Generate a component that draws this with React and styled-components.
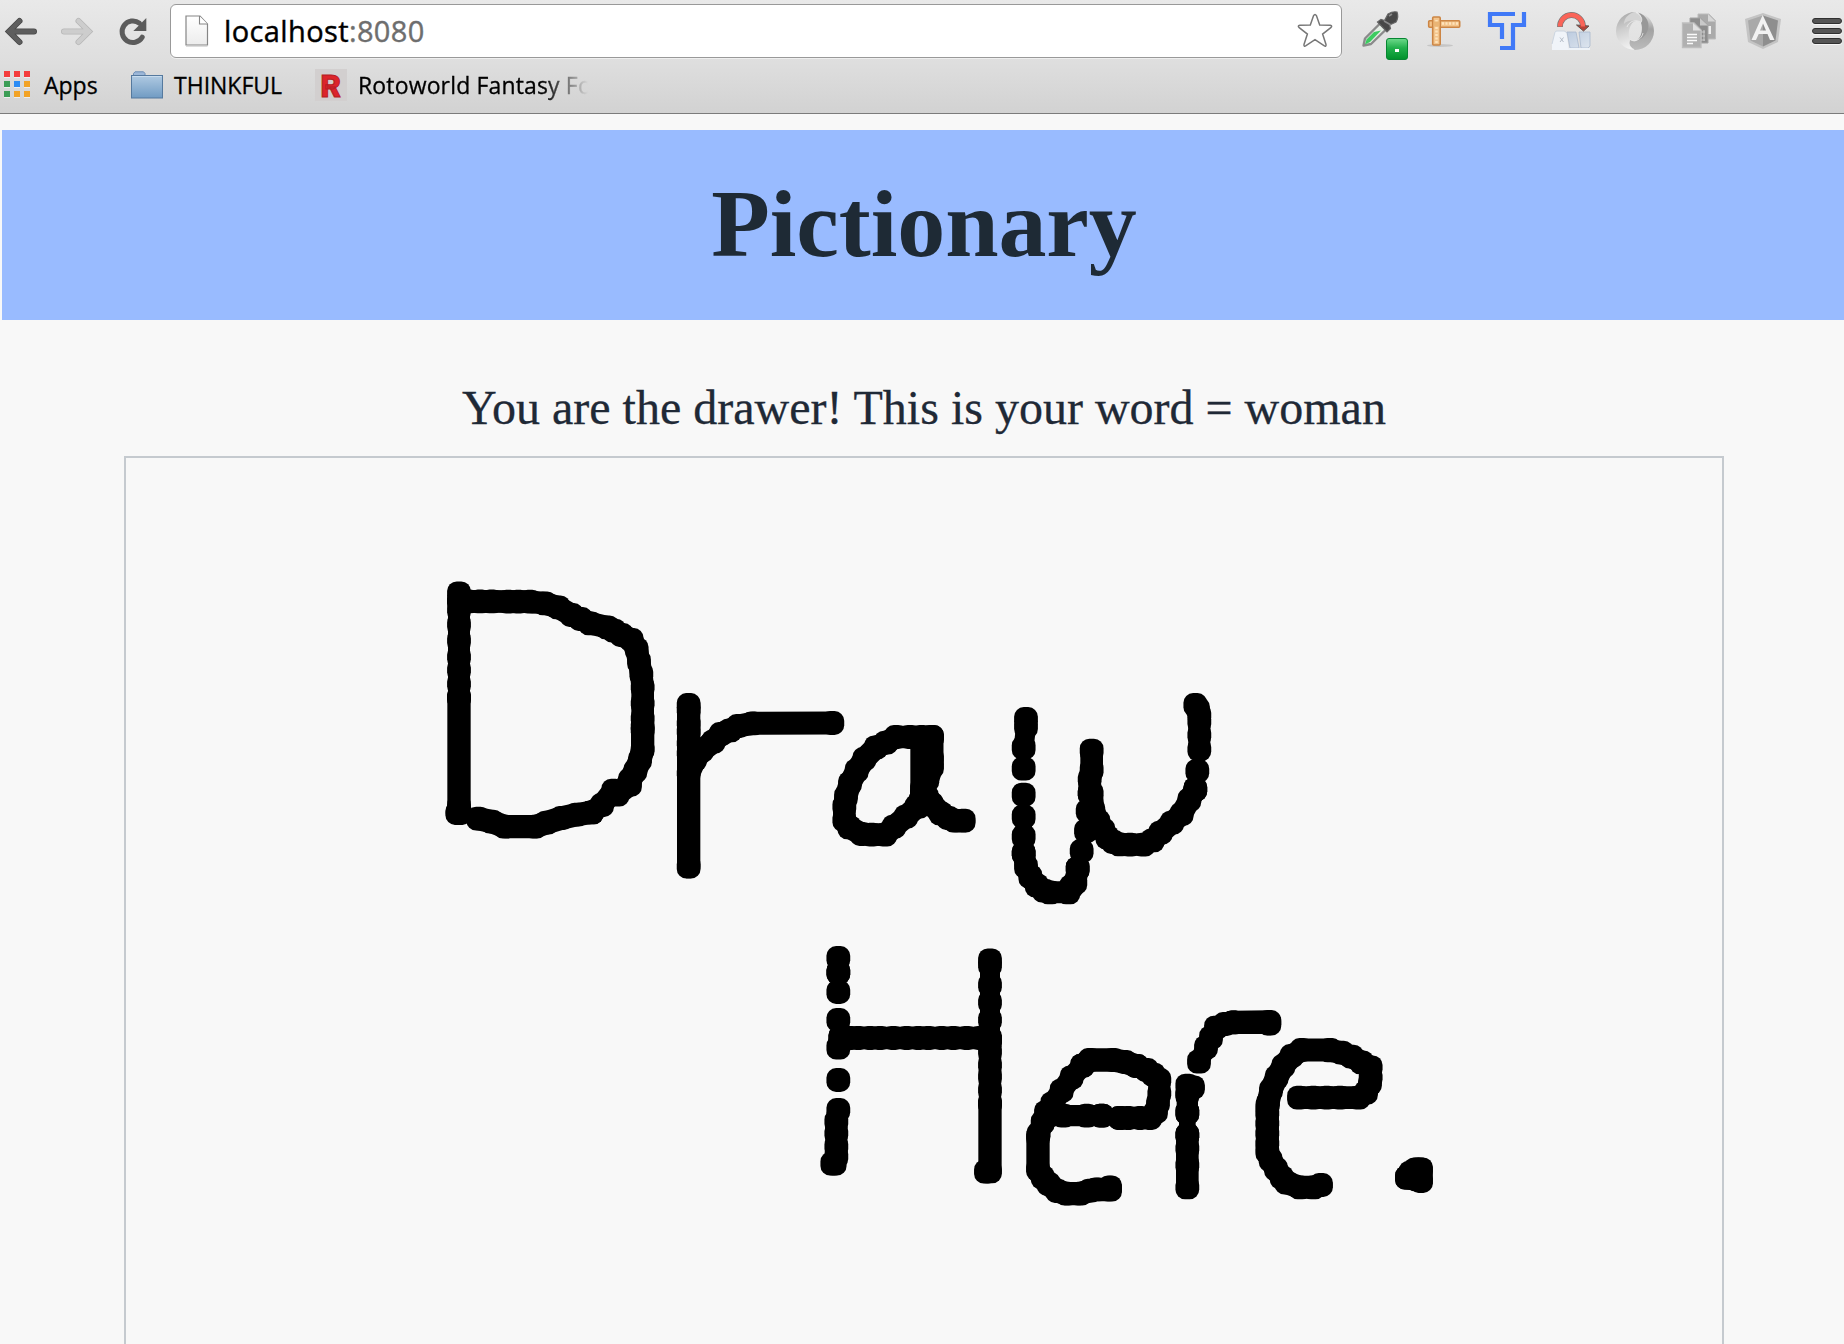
import React from "react";
import styled, { createGlobalStyle } from "styled-components";

const GlobalStyle = createGlobalStyle`
  * { box-sizing: border-box; }
  html, body { margin: 0; padding: 0; background: #f8f8f8; overflow: hidden; }
`;

const Window = styled.div`
  display: flex;
  flex-direction: column;
  height: 1344px;
  overflow: hidden;
  background: #f8f8f8;
`;

const Chrome = styled.header`
  flex: none;
  height: 114px;
  border-bottom: 1px solid #7b7b7b;
  background: linear-gradient(#e9e9e9, #dedede 55%, #d2d2d2);
  font-family: "Open Sans", "Noto Sans", sans-serif;
  color: #000;
`;

const Toolbar = styled.div`
  display: flex;
  align-items: flex-start;
  height: 62px;
  padding: 4px 0 0 4px;
`;

const NavButtons = styled.div`
  display: flex;
  width: 166px;
  padding-top: 10px;
`;

const NavButton = styled.span`
  display: flex;
  width: ${(p) => p.$w}px;
  svg { display: block; }
`;

const AddressBar = styled.div`
  display: flex;
  align-items: center;
  width: 1172px;
  height: 54px;
  padding: 0 8px 0 14px;
  border: 1px solid #999;
  border-radius: 6px;
  background: #fff;
  box-shadow: 0 1px 0 rgba(255, 255, 255, 0.5);
`;

const Url = styled.span`
  flex: 1;
  margin-left: 15px;
  font-size: 29px;
  line-height: 40px;
  letter-spacing: 0.38px;
  -webkit-text-stroke: 0.4px currentColor;
`;

const Port = styled.span`
  color: #6e6e6e;
`;

const Extensions = styled.div`
  display: flex;
  gap: 26px;
  margin: 8px 0 0 18px;
`;

const Glyph = styled.svg`
  display: block;
  flex: none;
  overflow: visible;
`;

const Bookmarks = styled.nav`
  display: flex;
  height: 51px;
  padding-left: 4px;
`;

const Bookmark = styled.span`
  display: flex;
  align-items: center;
  height: 46px;
  width: ${(p) => p.$w}px;
`;

const BookmarkLabel = styled.span`
  margin-left: ${(p) => p.$gap}px;
  font-size: 23px;
  line-height: 32px;
  letter-spacing: ${(p) => p.$spacing || 0}px;
  white-space: nowrap;
  -webkit-text-stroke: 0.3px currentColor;
  ${(p) => p.$fade && "-webkit-mask-image: linear-gradient(90deg, #000 185px, transparent 230px); mask-image: linear-gradient(90deg, #000 185px, transparent 230px);"}
`;

const Page = styled.main`
  display: flex;
  flex-direction: column;
  align-items: center;
  width: 1844px;
  margin-left: 2px;
  padding-top: 16px;
  font-family: "Liberation Serif", "Times New Roman", serif;
  color: #1f2936;
`;

const Banner = styled.h1`
  display: flex;
  justify-content: center;
  width: 100%;
  height: 190px;
  margin: 0;
  padding-top: 39px;
  background: #99bbff;
  font-size: 96px;
  font-weight: 700;
  line-height: 110px;
  letter-spacing: -0.1px;
  color: #1e2a35;
`;

const Notice = styled.p`
  margin: 60px 0 0;
  height: 76px;
  font-size: 48px;
  line-height: 56px;
  white-space: nowrap;
  -webkit-text-stroke: 0.3px currentColor;
`;

const Board = styled.div`
  width: 1600px;
  height: 964px;
  border: 2px solid #c5cacf;
`;

/* Pen strokes, in thirds of a pixel from each group's origin.
   w is the width of the line joining the brush dabs; 0 leaves the dabs loose. */
const DAB = 35.7;
const drawing = [
  {
    origin: [430, 560],
    strokes: [
      { w: 66, p: "87,100 87,122 87,150 87,194 87,242 87,291 87,330 87,372 87,412" },
      { w: 70, p: "87,412 87,740 82,759 90,759" },
      { w: 68, p: "87,124 115,124 150,124 185,124 235,125 265,125 300,125 345,130 385,142 425,165 452,177 481,190 532,202 552,212 575,225 605,240 620,268 627,305 634,342 638,382 638,430 638,475 638,510" },
      { w: 70, p: "638,500 638,568 630,600 616,633 600,660 596,674" },
      { w: 66, p: "600,674 562,704 550,692 516,735 485,757" },
      { w: 70, p: "485,757 440,764 395,774 350,788 315,800 225,800 185,785 145,776" },
      { w: 70, p: "776,435 776,450 776,490 776,515 776,550 776,580 776,920" },
      { w: 69, p: "776,640 795,598 815,572 850,545 873,522 900,511 925,498 968,490 1207,489" },
    ],
  },
  {
    origin: [820, 660],
    strokes: [
      { w: 68, p: "336,231 305,231 270,231 228,231 198,248 168,262 133,297 110,332 90,370 78,410 73,440 73,480 88,502 125,522 155,524 195,524 222,500 258,470 290,440 306,405" },
      { w: 69, p: "336,231 336,295 336,320 322,360 306,400 295,440" },
      { w: 70, p: "306,250 306,385 320,410 335,432 362,460 385,474 405,482 431,482" },
      { w: 60, p: "618,177 618,200 611,263" },
      { w: 0, p: "611,326 611,404" },
      { w: 50, p: "611,470 611,530 611,580" },
      { w: 66, p: "611,580 618,620 631,650 650,676 672,692 690,697 745,697 754,680 766,668 773,626" },
      { w: 44, p: "773,626 785,573 798,513 803,453 809,400" },
      { w: 68, p: "809,400 809,358 815,330 815,272" },
      { w: 67, p: "815,400 820,450 835,485 850,510 862,532 880,546 900,553 930,554 970,554 998,541 1022,518 1056,488 1085,462 1108,420 1126,388" },
      { w: 44, p: "1126,388 1132,333" },
      { w: 66, p: "1138,268 1138,225 1138,185 1138,165 1134,147 1126,135" },
    ],
  },
  {
    origin: [800, 930],
    strokes: [
      { w: 56, p: "115,84 115,127" },
      { w: 30, p: "115,127 115,186" },
      { w: 0, p: "115,270 115,450" },
      { w: 66, p: "121,322 115,353" },
      { w: 66, p: "115,540 109,575 109,610 109,650 109,680 104,701 97,701" },
      { w: 68, p: "121,324 150,324 175,324 210,324 240,324 280,324 320,324 355,324 385,324 425,324 460,324 500,324 540,324 570,324" },
      { w: 60, p: "570,91 570,105 570,165 570,217 570,270 570,332" },
      { w: 67, p: "570,332 570,365 570,405 570,440 570,480 570,520" },
      { w: 70, p: "570,520 570,724 558,725" },
      { w: 64, p: "745,557 790,557 860,557 905,557" },
      { w: 66, p: "960,564 985,564 1020,564 1050,564 1068,545 1074,520 1078,490 1078,450 1060,434 1040,420 1010,408" },
      { w: 70, p: "1010,408 975,396 940,390 870,390 847,407" },
      { w: 64, p: "847,407 815,442 785,482 757,521 738,547 728,578 716,612" },
      { w: 70, p: "714,620 714,718 728,742 746,762 772,783 800,791 840,791 870,782 890,778 930,779 930,772" },
      { w: 20, p: "905,557 960,564" },
    ],
  },
  {
    origin: [1140, 990],
    strokes: [
      { w: 60, p: "177,215 198,172 213,143 228,113 255,102 280,97" },
      { w: 70, p: "280,97 388,96 388,101" },
      { w: 68, p: "142,287 159,292 142,315" },
      { w: 64, p: "142,310 142,368" },
      { w: 50, p: "142,368 142,435" },
      { w: 68, p: "142,435 142,475 142,525 142,592" },
      { w: 68, p: "477,323 520,323 560,323 600,323 655,323 678,308 690,280 692,262 692,232 665,217 635,200 605,188 570,181" },
      { w: 69, p: "570,180 485,180 455,198 430,228 410,262 393,300 384,340 382,350 382,370 382,400 382,430 382,460 382,485 392,510 408,537 425,562 440,578 480,592 520,592 543,585" },
      { w: 71, p: "801,563 812,548 828,538 843,538 843,573 832,568 801,563" },
    ],
  },
];

function Drawing() {
  return (
    <Glyph width="1596" height="960" viewBox="126 458 1596 960">
      {drawing.map((group, g) => (
        <g key={g} transform={`translate(${group.origin.join(" ")}) scale(0.33333)`}>
          {group.strokes.map((s, i) => (
            <g key={i}>
              {s.w > 0 && (
                <polyline points={s.p} fill="none" stroke="#000" strokeWidth={s.w} strokeLinecap="round" strokeLinejoin="round" />
              )}
              {s.p.split(" ").map((pt, j) => {
                const [x, y] = pt.split(",");
                return <rect key={j} x={x - DAB} y={y - DAB} width={DAB * 2} height={DAB * 2} rx="29" />;
              })}
            </g>
          ))}
        </g>
      ))}
    </Glyph>
  );
}

const BackArrow = ({ color, edge, flip }) => (
  <Glyph width="36" height="36" viewBox="0 0 36 36">
    <g transform={flip ? "translate(35 0) scale(-1 1)" : undefined} fill="none" strokeLinecap="round" strokeLinejoin="miter">
      <path d="M30 17.5H7 M15.500 7L5 17.500L15.500 28" stroke={edge} strokeWidth="6" />
      <path d="M30 17.5H7 M15.500 7L5 17.500L15.500 28" stroke={color} strokeWidth="4.500" />
    </g>
  </Glyph>
);

const Reload = () => (
  <Glyph width="32" height="36" viewBox="0 0 32 36">
    <path d="M25.2 23.200A10.800 10.800 0 1 1 22.500 9.200" fill="none" stroke="#5b5b5b" strokeWidth="5" strokeLinecap="round" />
    <path d="M29.300 4V17H16.300Z" fill="#5b5b5b" />
  </Glyph>
);

const PageIcon = () => (
  <Glyph width="24" height="32" viewBox="0 0 24 32">
    <defs>
      <linearGradient id="sheet" x1="0" y1="0" x2="0" y2="1">
        <stop offset="0" stopColor="#fff" />
        <stop offset="1" stopColor="#ececec" />
      </linearGradient>
    </defs>
    <path d="M1 1H15L22.500 9V30H1Z" fill="url(#sheet)" stroke="#858585" strokeWidth="1.200" />
    <path d="M14.500 1V9H22.500" fill="#fff" stroke="#858585" strokeWidth="1.100" />
    <path d="M1 31.500H22.500" stroke="#ddd" />
  </Glyph>
);

const Star = () => (
  <Glyph width="36" height="36" viewBox="0 0 36 36">
    <path
      d="M16.600 2.600Q18 0.200 19.400 2.600L22.700 12.100L33.200 12.300Q35.800 12.800 33.800 14.700L25.600 21.100L29 31.400Q29.400 34 27 32.700L18 26.700L9 32.700Q6.600 34 7 31.400L10.400 21.100L2.200 14.700Q0.200 12.800 2.800 12.300L13.300 12.100Z"
      fill="#fff"
      stroke="#777"
      strokeWidth="1.500"
    />
  </Glyph>
);

const Dropper = () => (
  <Glyph width="38" height="38" viewBox="0 0 38 38">
    <defs>
      <linearGradient id="badge" x1="0" y1="0" x2="0" y2="1">
        <stop offset="0" stopColor="#6fda8c" />
        <stop offset="0.450" stopColor="#22b04c" />
        <stop offset="1" stopColor="#00912b" />
      </linearGradient>
    </defs>
    <path d="M3.500 33.500L5 26.500L20 11.500L26 17.500L11 32Z" fill="#e6ede6" stroke="#8a8a8a" strokeWidth="2.400" strokeLinejoin="round" />
    <path d="M5 32.500L6.500 27.500L14 20L21 18.500L10 30Z" fill="#3ccb60" />
    <path d="M17.500 10L21 7.500L24.500 8.500L28 2Q33-1 37 0Q39 5 36 10L29.500 13L30.500 16.500L27 20Z" fill="#484848" stroke="#666" strokeWidth="1.200" />
    <path d="M29 4L32 2M24 9L31 13" stroke="#8b8b8b" strokeWidth="1.600" />
    <rect x="26.500" y="26.500" width="21" height="21" rx="2.500" fill="url(#badge)" stroke="#078632" />
    <rect x="35" y="37" width="4" height="3" fill="#fff" />
  </Glyph>
);

const Ruler = () => (
  <Glyph width="38" height="38" viewBox="0 0 38 38">
    <ellipse cx="16" cy="33.500" rx="13" ry="1.500" fill="#bbb" opacity="0.700" />
    <g fill="#f3c48c" stroke="#cc8544" strokeWidth="1.600">
      <rect x="4.700" y="8.700" width="31" height="6.500" rx="1" />
      <rect x="8.700" y="5" width="7.500" height="28" rx="1" />
    </g>
    <path d="M18 11.500H34M12.500 8V31" stroke="#ffe3bb" strokeWidth="2.500" strokeDasharray="2 1.500" />
    <rect x="9.500" y="9.500" width="6" height="5" fill="#eab575" />
  </Glyph>
);

const BlueT = () => (
  <Glyph width="38" height="38" viewBox="0 0 38 38">
    <path d="M27 2H2V13H14V27M36 0V13H25V36H12" fill="none" stroke="#4079f7" strokeWidth="4.200" />
  </Glyph>
);

const ShiftKeys = () => (
  <Glyph width="38" height="38" viewBox="0 0 38 38">
    <defs>
      <linearGradient id="key" x1="0" y1="0" x2="1" y2="1">
        <stop offset="0" stopColor="#bccbdf" />
        <stop offset="1" stopColor="#dde5ee" />
      </linearGradient>
    </defs>
    <path d="M0 38V32L3 20Q3.500 19 5 19H12Q14 19 14.500 21L17 38Z" fill="#f0f4f9" />
    <path d="M0 32L3 20Q3.500 19 5 19H12Q14 19 14.500 21" fill="none" stroke="#ccd5e0" />
    <path d="M15 20H24L27 36H18Z M27 20H38V34L36 36H29Z" fill="url(#key)" stroke="#a9b9ce" strokeWidth="0.800" />
    <path d="M17 37H38" stroke="#eef3f8" strokeWidth="2" />
    <path d="M8 25.500L11.500 30M11.500 25.500L8 30" stroke="#b5bdc8" strokeWidth="1" />
    <path d="M8 15A11.500 11.500 0 0 1 31 14" fill="none" stroke="#777" strokeWidth="5.800" />
    <path d="M24.500 13L37 14L31.500 19Z" fill="#b84136" stroke="#5e5450" strokeWidth="1" />
    <path d="M8 14.500A11.500 11.500 0 0 1 31 14.500" fill="none" stroke="#fa6458" strokeWidth="4.300" />
  </Glyph>
);

const JsonRing = () => (
  <Glyph width="38" height="38" viewBox="0 0 38 38">
    <defs>
      <linearGradient id="ringA" x1="0.300" y1="0" x2="0.500" y2="1">
        <stop offset="0" stopColor="#a6a6a6" />
        <stop offset="0.450" stopColor="#cfcfcf" />
        <stop offset="1" stopColor="#f2f2f2" />
      </linearGradient>
      <linearGradient id="ringB" x1="0.500" y1="0" x2="0.500" y2="1">
        <stop offset="0" stopColor="#ededed" />
        <stop offset="0.450" stopColor="#a2a2a2" />
        <stop offset="1" stopColor="#bcbcbc" />
      </linearGradient>
    </defs>
    <path d="M19 0A19 19 0 0 0 19 38C14 35 12 31 14 27.500C11 22 14 9 20.500 9C13 5 15 2 19 0Z" fill="url(#ringA)" />
    <path d="M19 38A19 19 0 0 0 19 0C24 3 27 7 25 10.500C28 16 26 27 20 29C17 29.500 15 28.500 14 27.500C12 31 14 36 19 38Z" fill="url(#ringB)" />
    <path d="M8 12C11 8 19 7 25 11C27 7 24 2 19 0C13 1 8 6 8 12Z" fill="#d4d4d4" />
    <path d="M22 0.500C31 3 35 12 31 20C29 24 25 28 20 29C26 26 27 16 25 10.500C27 7 25 3 22 0.500Z" fill="#989898" />
    <path d="M20 0.500C25 3 27 7 25 10.500C20 7 13 9 11 15M18 37.500C13 35 12 31 14 27.500C19 31 26 27 27 21" fill="none" stroke="#ececec" strokeWidth="0.800" />
  </Glyph>
);

const Documents = () => (
  <Glyph width="38" height="38" viewBox="0 0 38 38">
    <path d="M18 2H29L35.500 8.500V27H18Z" fill="#aaa" stroke="#bcbcbc" />
    <path d="M28 2V9.500H35.500Z" fill="#d6d6d6" />
    <rect x="27" y="14" width="4" height="8" fill="#eee" />
    <path d="M10 6H21L28 13V31H10Z" fill="#8d8d8d" stroke="#a5a5a5" />
    <path d="M20 6V13.500H28Z" fill="#c9c9c9" />
    <path d="M20 20H25M20 24H25M20 28H25M21 18V29M24 18V29" stroke="#d2d2d2" strokeWidth="0.900" />
    <path d="M2.500 11H14L21 18V35.500H2.500Z" fill="#b0b0b0" stroke="#bebebe" strokeWidth="1.300" />
    <path d="M13 11V18.500H21Z" fill="#e1e1e1" />
    <path d="M7 22.500H17M7 25.500H17M7 28.500H17M7 31.500H13" stroke="#fafafa" strokeWidth="1.300" />
  </Glyph>
);

const Angular = () => (
  <Glyph width="38" height="38" viewBox="0 0 38 38">
    <path d="M19 1L37 7L34 30L19 37L4 30L1 7Z" fill="#c4c4c4" />
    <path d="M19 3.500V34.500L6.500 28.500L4 8.500Z" fill="#a9a9a9" />
    <path d="M19 3.500V34.500L31.500 28.500L34 8.500Z" fill="#8e8e8e" />
    <path fillRule="evenodd" d="M18.700 3L30.500 28H26L23.500 22H14.700L12 28H7.500Z M19 11.500L16 18.500H22Z" fill="#f2f2f2" />
  </Glyph>
);

const Menu = () => (
  <Glyph width="36" height="38" viewBox="0 0 36 38">
    {[6, 16, 26].map((y) => (
      <g key={y}>
        <rect x="4" y={y + 1} width="30" height="6" rx="3" fill="#f6f6f6" />
        <rect x="4.500" y={y + 0.500} width="29" height="5" rx="2.500" fill="#555" stroke="#303030" />
      </g>
    ))}
  </Glyph>
);

const appColors = ["#f33c3c", "#f33c3c", "#f33c3c", "#3c9d56", "#2c8cf5", "#f2a326", "#3c9d56", "#f2a326", "#f2a326"];

const AppsGrid = () => (
  <Glyph width="26" height="28" viewBox="0 0 26 28">
    {appColors.map((c, i) => (
      <g key={i}>
        <rect x={(i % 3) * 10} y={Math.floor(i / 3) * 10 + 1} width="6" height="6" fill="#eee" />
        <rect x={(i % 3) * 10} y={Math.floor(i / 3) * 10} width="6" height="6" fill={c} />
      </g>
    ))}
  </Glyph>
);

const Folder = () => (
  <Glyph width="32" height="28" viewBox="0 0 32 28">
    <defs>
      <linearGradient id="folder" x1="0" y1="0" x2="0" y2="1">
        <stop offset="0" stopColor="#b0cae2" />
        <stop offset="1" stopColor="#709bc3" />
      </linearGradient>
    </defs>
    <path d="M2.500 6V2.500L4 0.800H12.500L14 2.500V6Z" fill="#9cb7d8" stroke="#6b8db5" />
    <rect x="0.500" y="4.500" width="31" height="22.500" fill="url(#folder)" stroke="#55799e" />
    <path d="M1.500 5.500H30.500" stroke="#c8dcee" />
  </Glyph>
);

const Rotoworld = () => (
  <Glyph width="32" height="32" viewBox="0 0 32 32">
    <rect width="32" height="32" fill="#d2cfcf" />
    <text x="5.500" y="27.500" textLength="20.500" lengthAdjust="spacingAndGlyphs" fontFamily="Roboto, sans-serif" fontWeight="900" fontSize="32" fill="#dc252b" stroke="#b51d25" strokeWidth="1">R</text>
  </Glyph>
);

export default function App() {
  return (
    <Window>
      <GlobalStyle />
      <Chrome>
        <Toolbar>
          <NavButtons>
            <NavButton $w={55}><BackArrow color="#5e5e5e" edge="#484848" /></NavButton>
            <NavButton $w={58}><BackArrow color="#cdcdcd" edge="#b7b7b7" flip /></NavButton>
            <NavButton $w={32}><Reload /></NavButton>
          </NavButtons>
          <AddressBar>
            <PageIcon />
            <Url>localhost<Port>:8080</Port></Url>
            <Star />
          </AddressBar>
          <Extensions>
            <Dropper />
            <Ruler />
            <BlueT />
            <ShiftKeys />
            <JsonRing />
            <Documents />
            <Angular />
            <Menu />
          </Extensions>
        </Toolbar>
        <Bookmarks>
          <Bookmark $w={127}>
            <AppsGrid />
            <BookmarkLabel $gap={14}>Apps</BookmarkLabel>
          </Bookmark>
          <Bookmark $w={184}>
            <Folder />
            <BookmarkLabel $gap={11}>THINKFUL</BookmarkLabel>
          </Bookmark>
          <Bookmark $w={280}>
            <Rotoworld />
            <BookmarkLabel $gap={11} $spacing={0.15} $fade>Rotoworld Fantasy Fo</BookmarkLabel>
          </Bookmark>
        </Bookmarks>
      </Chrome>
      <Page>
        <Banner>Pictionary</Banner>
        <Notice>You are the drawer! This is your word = woman</Notice>
        <Board>
          <Drawing />
        </Board>
      </Page>
    </Window>
  );
}
